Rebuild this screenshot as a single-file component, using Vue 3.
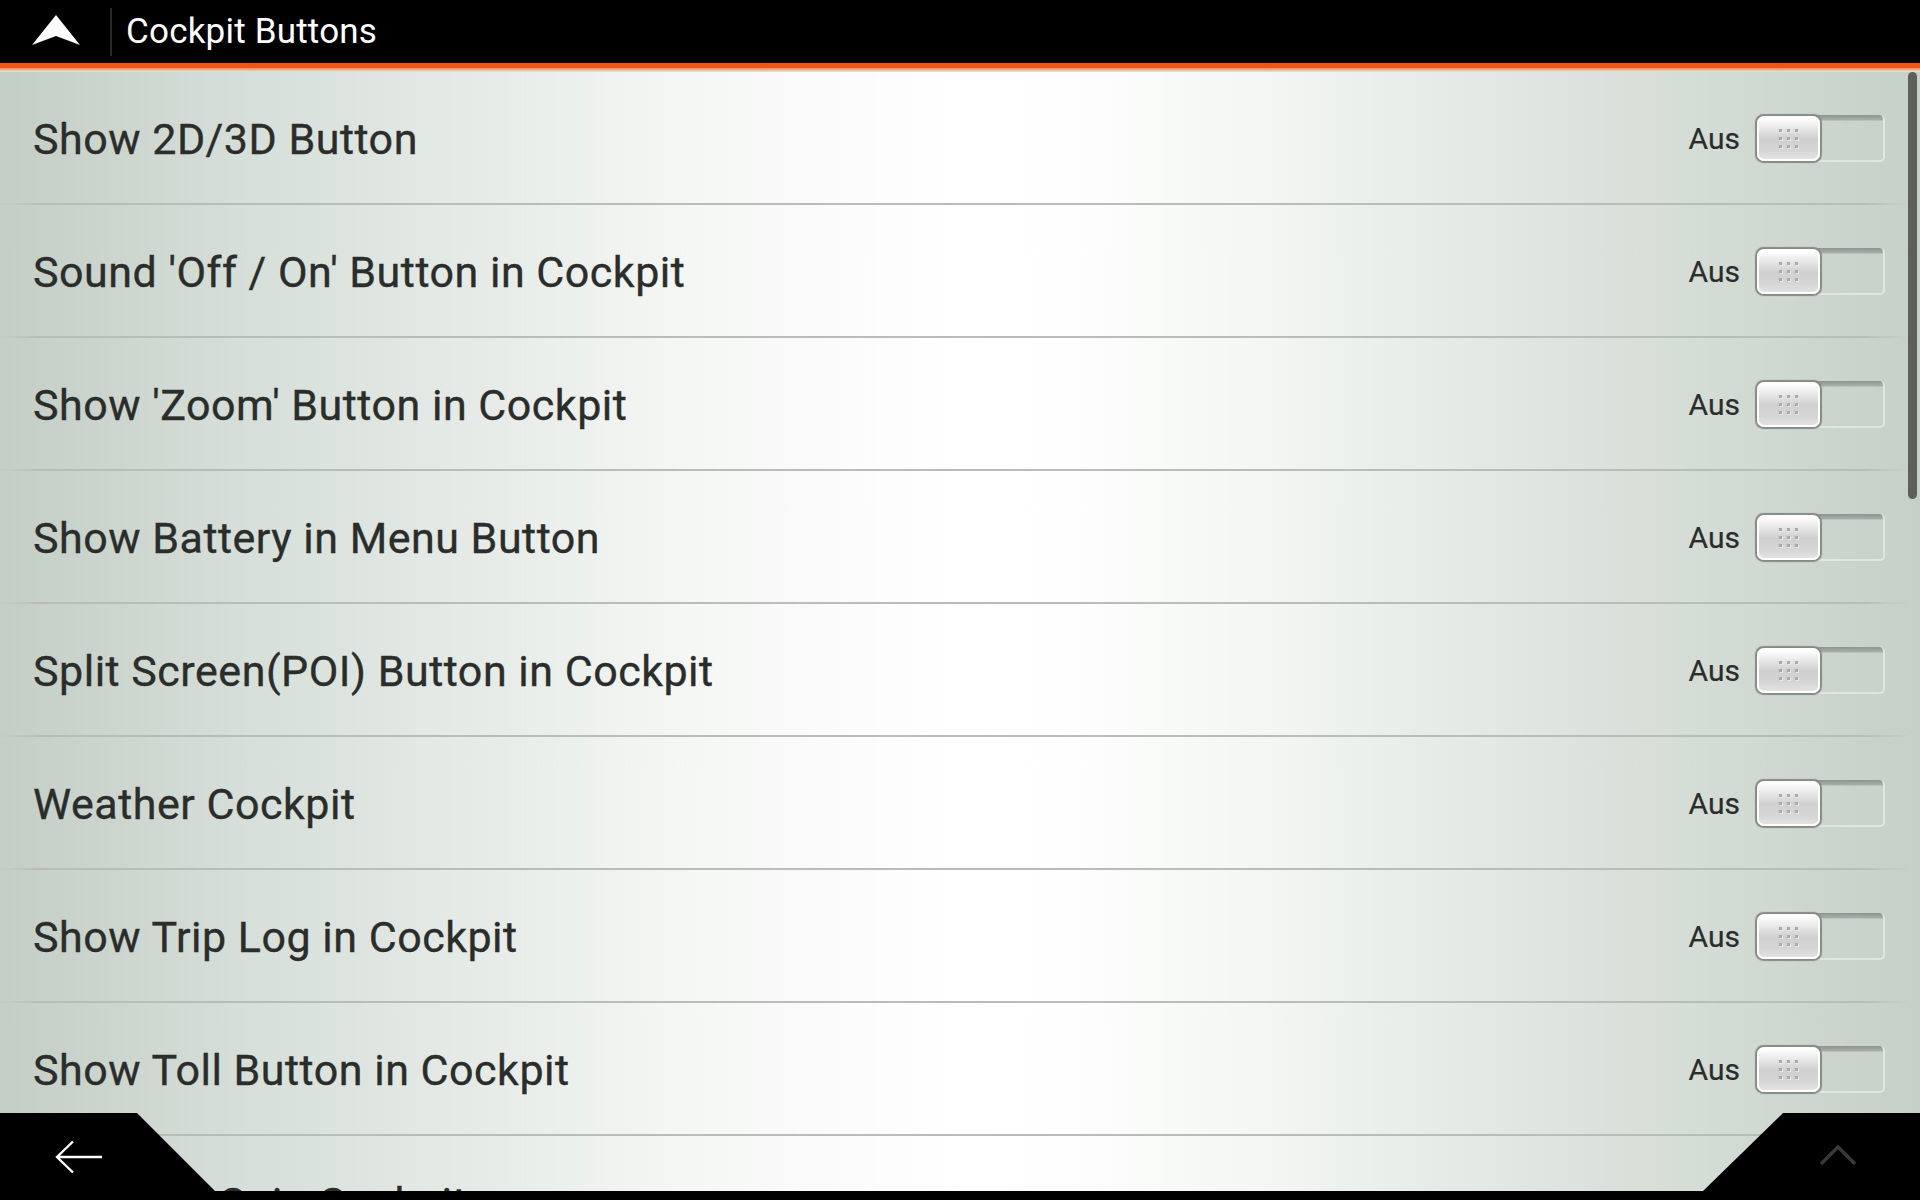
<template>
  <div class="screen">
    <header class="top-bar">
      <svg class="logo" width="50" height="32" viewBox="0 0 50 32">
        <path d="M25 1 L49 31 L25 22 L1 31 Z" fill="#fff" />
      </svg>
      <span class="top-sep"></span>
      <h1 class="title">Cockpit Buttons</h1>
    </header>
    <div class="accent"></div>

    <main class="list">
      <div v-for="item in items" :key="item" class="row">
        <span class="label">{{ item }}</span>
        <span class="state">Aus</span>
        <div class="toggle">
          <div class="knob">
            <i v-for="n in 9" :key="n" class="dot"></i>
          </div>
        </div>
      </div>
    </main>

    <div class="scrollbar"></div>

    <footer class="bottom">
      <svg class="bottom-shape" width="1920" height="87" viewBox="0 0 1920 87">
        <path d="M0 0 H137 L215 78 H1703 L1783 0 H1920 V87 H0 Z" fill="#000" />
      </svg>
      <svg class="back" width="48" height="34" viewBox="0 0 48 34">
        <path d="M47 17 H2 M18 1.5 L2 17 L18 32.5" fill="none" stroke="#fff" stroke-width="2.4" />
      </svg>
      <svg class="up" width="38" height="22" viewBox="0 0 38 22">
        <path d="M2 20 L19 3 L36 20" fill="none" stroke="#3a3a3a" stroke-width="3.4" />
      </svg>
    </footer>
  </div>
</template>

<script setup>
const items = [
  'Show 2D/3D Button',
  "Sound 'Off / On' Button in Cockpit",
  "Show 'Zoom' Button in Cockpit",
  'Show Battery in Menu Button',
  'Split Screen(POI) Button in Cockpit',
  'Weather Cockpit',
  'Show Trip Log in Cockpit',
  'Show Toll Button in Cockpit',
  'Show Air Gain Cockpit',
];
</script>

<style>
html,
body {
  margin: 0;
  background: #000;
}
</style>

<style scoped>
.screen {
  position: relative;
  width: 1920px;
  height: 1200px;
  overflow: hidden;
  font-family: Roboto, 'Liberation Sans', sans-serif;
  background: linear-gradient(90deg, #c3cec6 0%, #d6dfd9 13%, #e6ebe7 25%, #f5f7f5 36%, #ffffff 50%, #fdfefd 56%, #f3f6f3 66%, #dfe5e0 80%, #c5d0c8 100%);
}
.top-bar {
  height: 63px;
  background: #000;
  display: flex;
  align-items: center;
  padding-left: 31px;
  box-sizing: border-box;
}
.logo {
  margin-top: -3px;
}
.top-sep {
  width: 2px;
  height: 48px;
  background: #2a2a2a;
  margin-left: 29px;
  margin-right: 14px;
}
.title {
  margin: 0;
  font-size: 35px;
  font-weight: 400;
  letter-spacing: 0.2px;
  color: #fff;
}
.accent {
  height: 9px;
  box-sizing: border-box;
  border-top: 5px solid #f4540f;
  background: linear-gradient(#f98a55, #dfe5e0);
}
.row {
  height: 133px;
  box-sizing: border-box;
  display: flex;
  align-items: center;
  padding: 2px 35px 0 33px;
  border-bottom: 2px solid;
  border-image: linear-gradient(90deg, transparent, #b9bdba 2%, #b9bdba 97%, transparent 99.4%) 1;
}
.label {
  flex: 1;
  padding-top: 1px;
  font-size: 43px;
  font-weight: 400;
  -webkit-text-stroke: 0.35px #2b2d2b;
  color: #2b2d2b;
  letter-spacing: 0.5px;
}
.state {
  font-size: 30px;
  -webkit-text-stroke: 0.2px #2b2d2b;
  color: #2b2d2b;
  margin-right: 16px;
}
.toggle {
  width: 129px;
  height: 47px;
  box-sizing: border-box;
  border-radius: 5px;
  border: 2px solid #dfe6e0;
  border-top: 0;
  background: linear-gradient(#8e948f, #a8afaa 5px, transparent 6px);
  position: relative;
}
.knob {
  position: absolute;
  left: -1px;
  top: 1px;
  width: 63px;
  height: 45px;
  box-sizing: border-box;
  border: 2px solid #fff;
  border-radius: 7px;
  box-shadow: 0 0 1px 1.5px #858a86;
  background: linear-gradient(#ffffff, #cfcfcf 52%, #d6d6d6 80%, #e2e2e2);
  display: grid;
  grid-template-columns: repeat(3, 3px);
  grid-template-rows: repeat(3, 3px);
  gap: 5px;
  justify-content: center;
  align-content: center;
}
.dot {
  background: #a9a9a9;
  box-shadow: 1px 1px 0 #e8e8e8;
}
.scrollbar {
  position: absolute;
  right: 3px;
  top: 72px;
  width: 9px;
  height: 427px;
  background: #5d5f5c;
  border-radius: 5px;
}
.bottom {
  position: absolute;
  left: 0;
  right: 0;
  bottom: 0;
  height: 87px;
}
.bottom-shape {
  display: block;
}
.back {
  position: absolute;
  left: 55px;
  top: 27px;
}
.up {
  position: absolute;
  left: 1819px;
  top: 31px;
}
</style>
